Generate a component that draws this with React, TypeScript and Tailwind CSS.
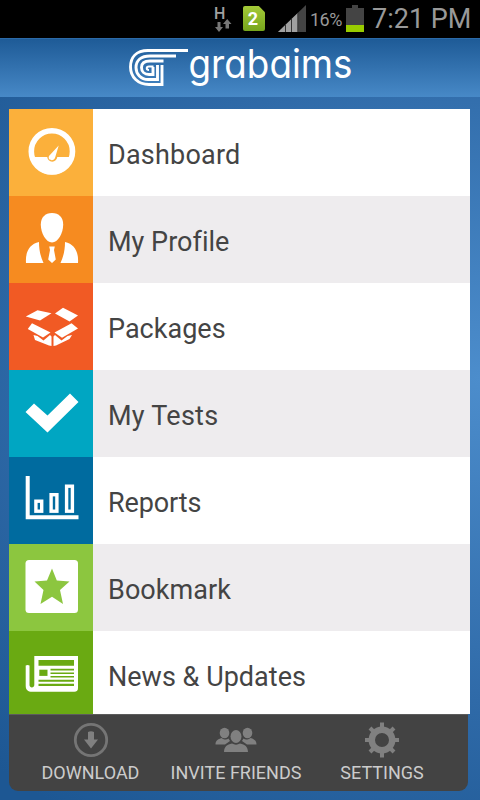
import type { ReactNode } from 'react';

type MenuItem = {
  label: string;
  tile: string;
  row: string;
  text: string;
  icon: ReactNode;
};

function GaugeIcon() {
  return (
    <svg className="w-[84px] h-[87px]" viewBox="0 0 84 87" aria-hidden="true">
      <circle cx="42.900" cy="42.400" r="20.600" fill="none" stroke="#fff" strokeWidth="5.600" />
      <path fill="#fff" d="M22 48h16.200c.3 2.700 2.300 4.700 5 4.700s4.800-2 5.100-4.700H64c-2 10-10 17.500-21 17.500S24 58 22 48z" />
      <path fill="#fff" d="M49.700 36.500L40 47c-1 2.500.5 4.200 2.700 4.200 2 0 3.200-1.400 3.600-3.200z" />
    </svg>
  );
}

function ProfileIcon() {
  return (
    <svg className="w-[84px] h-[87px]" viewBox="0 0 84 87" fill="#fff" aria-hidden="true">
      <path d="M43 17c7 0 11.200 4.700 11.200 11.500C54.200 37 49 46.500 43 46.500S31.800 37 31.800 28.500C31.800 21.700 36 17 43 17z" />
      <path d="M30 46c0 8 1.500 14.500 4.500 21H17c-.8-11 3.500-19 13-21z" />
      <path d="M56 46c0 8-1.500 14.500-4.500 21H69c.8-11-3.500-19-13-21z" />
      <path d="M40.200 50.500h5.600l-.8 3.500 1.800 9.500-3.800 3.500-3.800-3.500L41 54z" />
    </svg>
  );
}

function PackageIcon() {
  return (
    <svg className="w-[84px] h-[87px]" viewBox="0 0 84 87" fill="#fff" aria-hidden="true">
      <path d="M16.800 33.500L28.500 27.200l14 3L31 37.500z" />
      <path d="M54 24.800L69 32.500l-8.500 6-14.500-8z" />
      <path d="M23 40.200l18.500 9.300-7.500 5L18.800 46z" />
      <path d="M62.500 40.200L69 45.500 53 54.800l-7.500-5.300z" />
      <path d="M24.500 52l4 1 6 4.500 6.500-5.500 1.500 1.500v9.500L40 62.500 26 57z" />
      <path d="M63 52l-4.500 1-6 4.500-6.500-5.500-1.500 1.500V63l2.500-.5L60.500 56z" />
    </svg>
  );
}

function CheckIcon() {
  return (
    <svg className="w-[84px] h-[87px]" viewBox="0 0 84 87" fill="#fff" aria-hidden="true">
      <path d="M25 33.500l13.500 12L61 23.500l8.500 8.500L38.500 62.500 16.500 42z" />
    </svg>
  );
}

function ChartIcon() {
  return (
    <svg className="w-[84px] h-[87px]" viewBox="0 0 84 87" fill="none" stroke="#fff" aria-hidden="true">
      <path strokeWidth="4" d="M18.700 19v41.300H69.500" />
      <rect x="26.900" y="44.200" width="5.800" height="10" strokeWidth="3.400" />
      <rect x="42.100" y="37.700" width="5.800" height="16.500" strokeWidth="3.400" />
      <rect x="57.600" y="29.200" width="5.800" height="25" strokeWidth="3.400" />
    </svg>
  );
}

function StarIcon() {
  return (
    <svg className="w-[84px] h-[87px]" viewBox="0 0 84 87" aria-hidden="true">
      <rect x="16.500" y="16" width="52.500" height="53" rx="3.500" fill="#fff" />
      <path fill="#8cc63f" d="M43 24.500l4.800 12 12.700 1-9.500 8.500 3 14-11-7.200L31.500 60l3-14-9-8.500 12.500-1z" />
    </svg>
  );
}

function NewsIcon() {
  return (
    <svg className="w-[84px] h-[84px]" viewBox="0 0 84 84" aria-hidden="true">
      <path
        fill="#fff"
        d="M25.300 25H69v32c0 2.500-1.200 3.700-3.700 3.700H23c-4 0-6.300-2-6.300-6V34.500c1-.8 2.800-.8 3.800 0V54c0 3.200 4.800 3.200 4.800 0z"
      />
      <g fill="#6aaa12">
        <path d="M29.500 29H65v5.700H29.500z" />
        <path d="M30.300 38.700h8.200v6.200h-8.200z" />
        <path d="M41.500 37.800H65v1.600H41.500zM41.500 41.400H65V43H41.500zM41.500 45H65v1.600H41.500z" />
        <path d="M29.500 48.700H65v2H29.500zM29.500 52.800H65v2.200H29.500z" />
      </g>
    </svg>
  );
}

const MENU: MenuItem[] = [
  { label: 'Dashboard', tile: 'bg-[#fbb03b]', row: 'bg-white', text: 'tracking-[0.22px]', icon: <GaugeIcon /> },
  { label: 'My Profile', tile: 'bg-[#f68b20]', row: 'bg-[#eeecee]', text: 'tracking-[0.02px]', icon: <ProfileIcon /> },
  { label: 'Packages', tile: 'bg-[#f15a24]', row: 'bg-white', text: 'tracking-[0.02px]', icon: <PackageIcon /> },
  { label: 'My Tests', tile: 'bg-[#00a6c2]', row: 'bg-[#eeecee]', text: 'tracking-[0.25px]', icon: <CheckIcon /> },
  { label: 'Reports', tile: 'bg-[#006b9f]', row: 'bg-white', text: 'tracking-[-0.1px]', icon: <ChartIcon /> },
  { label: 'Bookmark', tile: 'bg-[#8cc63f]', row: 'bg-[#eeecee]', text: 'tracking-[0.06px]', icon: <StarIcon /> },
  { label: 'News & Updates', tile: 'bg-[#6aaa12]', row: 'bg-white', text: 'tracking-[0.02px]', icon: <NewsIcon /> },
];

function StatusBar() {
  return (
    <div className="flex h-[38px] items-start bg-black pl-[214px] text-[#999]">
      <div className="flex w-[29px] flex-col">
        <span className="mt-[5px] h-[14px] text-[16px] leading-[17px] font-medium text-[#a0a0a0]">H</span>
        <svg className="ml-[1px] h-[13px] w-[17px]" viewBox="0 0 17 13" fill="#777" aria-hidden="true">
          <path d="M2.500 3h3v5H8l-4 5-4-5h2.500zM10.500 9.500V5H8l4.200-5 4.300 5H14v4.500z" />
        </svg>
      </div>
      <div className="mt-[6px] flex h-[25px] w-[22px] items-center justify-center rounded-[2px] bg-linear-to-b from-[#a4ca38] to-[#76a51c] pr-[2px] text-[18px] font-bold text-white [clip-path:polygon(0_0,72%_0,100%_25%,100%_100%,0_100%)]">
        2
      </div>
      <svg className="mt-[5px] ml-[13px] h-[27px] w-[28px]" viewBox="0 0 28 27" aria-hidden="true">
        <path fill="#444" d="M28 0v27H0z" />
        <path fill="#a0a0a0" d="M20 7.700V27H0z" />
        <path stroke="#333" d="M7.500 19v8M13.500 14v13M19.800 8v19" />
      </svg>
      <span className="mt-[9px] ml-[4px] w-[34px] text-[18px] leading-[22px] tracking-[-0.500px]">16%</span>
      <svg className="mt-[5px] ml-[2px] h-[27px] w-[18px]" viewBox="0 0 18 27" aria-hidden="true">
        <path fill="#444" d="M6 0h6v3h6v17H0V3h6z" />
        <path fill="#99cc00" d="M0 20h18v7H0z" />
      </svg>
      <span className="mt-[3px] ml-[8px] text-[27px] leading-[32px] whitespace-nowrap">7:21 PM</span>
    </div>
  );
}

function Header() {
  return (
    <header className="flex h-[59px] border-t border-[#2b6aa8] bg-linear-to-b from-[#1e5b97] to-[#4789c7]">
      <svg className="h-[58px] w-[480px] overflow-visible" viewBox="0 39 480 58" aria-label="grabaims">
        <g fill="none" stroke="#fff" strokeWidth="2.900">
          <path d="M188 50.500h-40c-12 0-17.500 7-17.500 16.500 0 10 7.500 17.500 18.500 17.500h13V65" />
          <path d="M176 56h-26c-9 0-14 4.500-14 11.500 0 6.500 5 12 12 12h9.500V65" />
          <path d="M163.500 61H150c-5.500 0-8.500 2.500-8.500 6.500s3 7 7.500 7h4V67" />
          <path d="M153.500 66.500H149c-3 0-3 3.500 0 3.500" strokeWidth="2" />
        </g>
        <text
          x="188.500"
          y="77.500"
          textLength="164"
          lengthAdjust="spacingAndGlyphs"
          className="fill-white font-['Inter',sans-serif] text-[39px] font-normal [font-feature-settings:'cv11']"
        >
          grabaims
        </text>
      </svg>
    </header>
  );
}

function MenuRow({ item }: { item: MenuItem }) {
  return (
    <li className={`flex h-[87px] w-[461px] overflow-hidden last:h-[83px] ${item.row}`}>
      <div className={`h-full w-[84px] shrink-0 ${item.tile}`}>{item.icon}</div>
      <span className={`pt-[30px] pl-[15px] text-[27px] leading-[32px] text-[#444] ${item.text}`}>{item.label}</span>
    </li>
  );
}

function DownloadIcon() {
  return (
    <svg className="h-[36px] w-[36px]" viewBox="0 0 36 36" aria-hidden="true">
      <circle cx="18" cy="18" r="15.700" fill="none" stroke="#757575" strokeWidth="2.800" />
      <path fill="#808080" d="M15 10q3-1.500 6 0v7.500h4L18 26.500l-7-9h4z" />
    </svg>
  );
}

function FriendsIcon() {
  return (
    <svg className="h-[36px] w-[42px]" viewBox="0 0 42 36" fill="#808080" aria-hidden="true">
      <ellipse cx="9.500" cy="11" rx="4.800" ry="5.300" />
      <ellipse cx="32.500" cy="11" rx="4.800" ry="5.300" />
      <path d="M.5 22.500c0-4 2.500-5.500 6-6.500 3 2 5 2 7 .5l1.500 2.500-5 3.500zM41.500 22.500c0-4-2.500-5.500-6-6.500-3 2-5 2-7 .5L27 19l5 3.500z" />
      <ellipse cx="21" cy="14.500" rx="5.500" ry="6.500" />
      <path d="M9 30c.3-5.500 3-7.500 8-8.500 2.500 1.500 5.500 1.500 8 0 5 1 7.700 3 8 8.500z" />
    </svg>
  );
}

function SettingsIcon() {
  return (
    <svg className="h-[36px] w-[36px]" viewBox="0 0 36 36" aria-hidden="true">
      <circle cx="18" cy="18" r="10.200" fill="none" stroke="#808080" strokeWidth="6.400" />
      <path
        stroke="#808080"
        strokeWidth="4"
        d="M18 .5V7M18 29v6.500M1 18h6M29 18h6M6 6l5 5M25 25l5 5M30 6l-5 5M11 25l-5 5"
      />
    </svg>
  );
}

function Footer() {
  return (
    <footer className="flex h-[77px] w-[459px] rounded-b-[9px] border-t border-[#5c5c5c] bg-[#434343] text-[18px] leading-[22px] whitespace-nowrap text-[#ccc]">
      <div className="flex w-[163px] flex-col items-center pt-[7px]">
        <DownloadIcon />
        <span className="mt-[4px]">DOWNLOAD</span>
      </div>
      <div className="flex w-[128px] flex-col items-center pt-[7px]">
        <FriendsIcon />
        <span className="mt-[4px]">INVITE FRIENDS</span>
      </div>
      <div className="flex w-[164px] flex-col items-center pt-[7px]">
        <SettingsIcon />
        <span className="mt-[4px]">SETTINGS</span>
      </div>
    </footer>
  );
}

export default function App() {
  return (
    <div className="flex h-[800px] w-[480px] flex-col overflow-hidden bg-[#22609c] font-['Roboto',sans-serif]">
      <StatusBar />
      <Header />
      <main className="flex-1 bg-[radial-gradient(ellipse_560px_430px_at_100%_40%,#4c8dcc,#2f6aa8_75%,#1d5793_125%)] pt-[12px] pl-[9px]">
        <ul>
          {MENU.map((item) => (
            <MenuRow key={item.label} item={item} />
          ))}
        </ul>
        <Footer />
      </main>
    </div>
  );
}
